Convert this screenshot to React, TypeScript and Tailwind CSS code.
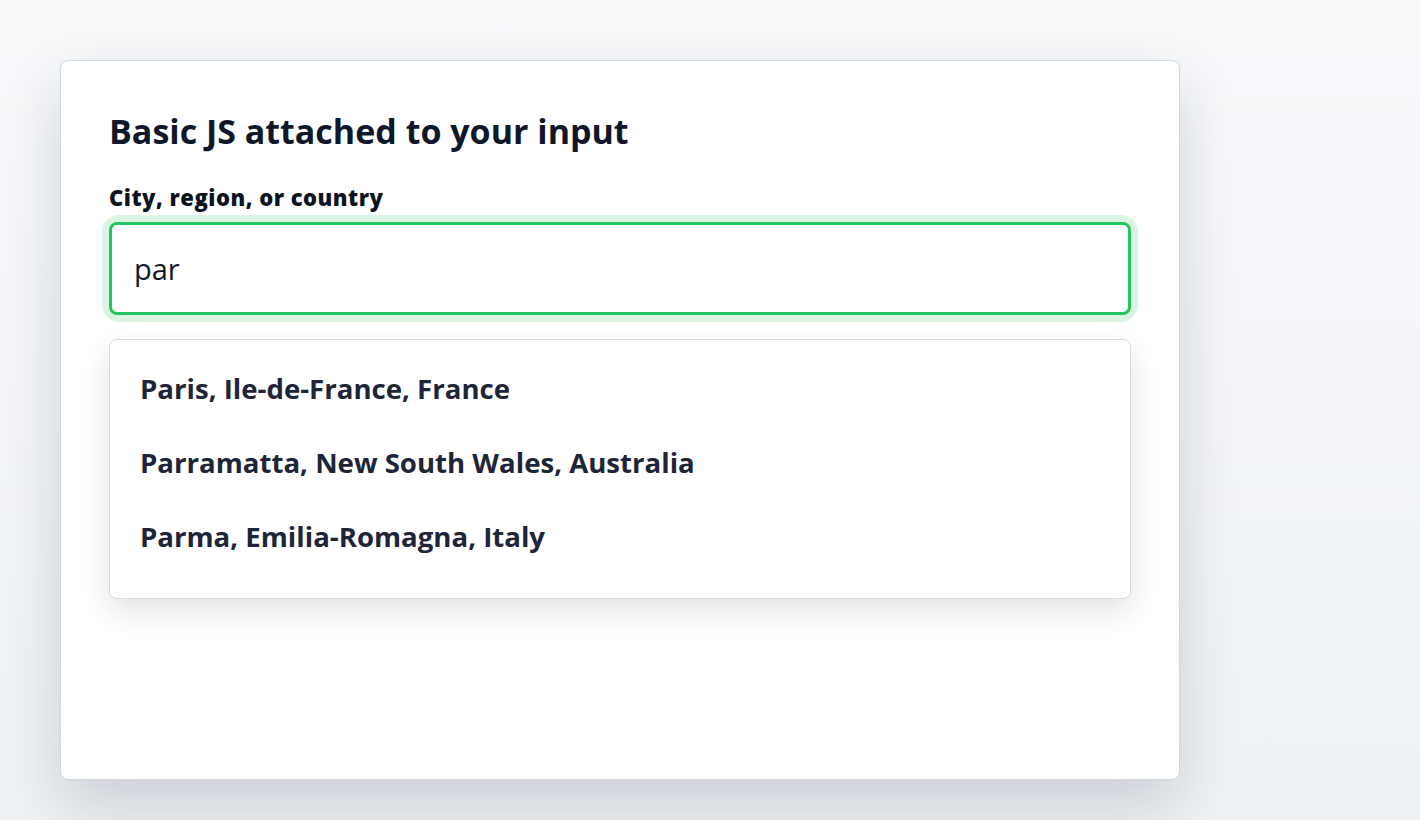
import { useState } from "react";

const RESULTS = [
  "Paris, Ile-de-France, France",
  "Parramatta, New South Wales, Australia",
  "Parma, Emilia-Romagna, Italy",
];

export default function App() {
  const [query, setQuery] = useState("par");

  return (
    <div className="min-h-screen bg-gradient-to-b from-[#f8f9fb] to-[#eef1f5] p-[60px] font-['Open_Sans',sans-serif]">
      <div className="w-[1120px] h-[720px] bg-white border border-[#cfd8e3] rounded-lg shadow-[0_24px_60px_rgba(15,23,42,0.16)] p-12">
        <h1 className="text-[34px] leading-[44px] font-bold text-[#0f172a]">
          Basic JS attached to your input
        </h1>

        <label className="block mt-[30px] text-[22px] leading-[28px] tracking-[0.5px] font-extrabold text-[#0b1220]">
          City, region, or country
        </label>

        <div className="mt-[11px] rounded-[10px] ring-[7px] ring-[#dcf5e3]">
          <input
            value={query}
            onChange={(e) => setQuery(e.target.value)}
            className="block w-full h-[93px] rounded-lg border-[3px] border-[#22c55e] bg-white px-[22px] text-[29px] text-[#111827] outline-none"
          />
        </div>

        {/* Suggestions */}
        <ul className="mt-[24px] bg-white border border-[#d5dbe4] rounded-lg shadow-[0_12px_30px_rgba(15,23,42,0.12)] pt-[12px] pb-[24px]">
          {RESULTS.map((r) => (
            <li
              key={r}
              className="h-[74px] flex items-center px-[30px] text-[27.6px] font-bold text-[#1e2538]"
            >
              {r}
            </li>
          ))}
        </ul>
      </div>
    </div>
  );
}
